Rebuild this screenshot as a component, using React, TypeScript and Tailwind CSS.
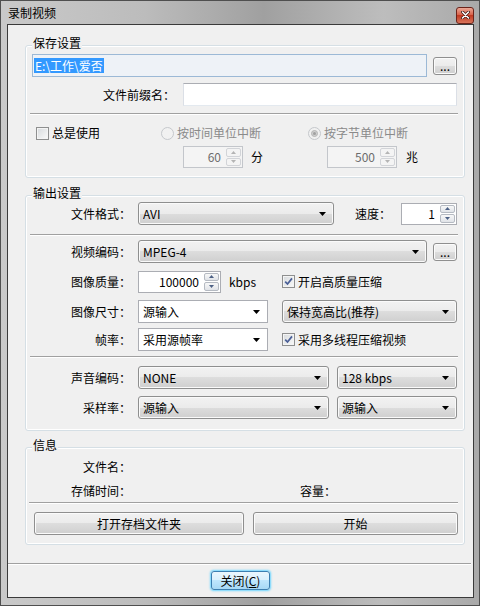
import React from "react"

// 小三角
function DropArrow() {
  return (
    <svg width="7" height="4" viewBox="0 0 7 4" className="shrink-0">
      <path d="M0 0h7L3.5 4z" fill="#000" />
    </svg>
  )
}

function Combo({ value, className, white }: { value: string; className: string; white?: boolean }) {
  return (
    <div
      className={`${className} h-[23px] shrink-0 flex items-center border pl-[4px] pr-[7px] ${
        white
          ? "border-[#abadb3] bg-white"
          : "rounded-[3px] border-[#8e8f8f] bg-[linear-gradient(#f2f2f2,#ebebeb_50%,#dddddd_50%,#cfcfcf)] shadow-[inset_0_0_0_1px_#fafafa]"
      }`}
    >
      <span className="flex-1 truncate leading-[16px]">{value}</span>
      <DropArrow />
    </div>
  )
}

function SpinBtn({ up, disabled }: { up?: boolean; disabled?: boolean }) {
  return (
    <div
      className={`flex-1 flex items-center justify-center rounded-[2px] border ${
        disabled ? "border-[#d2d4d8] bg-[#f4f4f4]" : "border-[#b5bac2] bg-[linear-gradient(#f8f8f8,#e0e3e8)]"
      }`}
    >
      <svg width="5" height="3" viewBox="0 0 5 3">
        <path d={up ? "M0 3h5L2.5 0z" : "M0 0h5L2.5 3z"} fill={disabled ? "#b4b4b4" : "#4d6185"} />
      </svg>
    </div>
  )
}

function Spin({ value, className, disabled }: { value: string; className: string; disabled?: boolean }) {
  return (
    <div
      className={`${className} h-[22px] shrink-0 flex border ${
        disabled ? "border-[#c3c6cb] bg-[#f4f4f4] text-[#6d6d6d]" : "border-[#abadb3] bg-white"
      }`}
    >
      <span className="flex-1 text-right pr-[5px] leading-[20px]">{value}</span>
      <div className="w-[16px] flex flex-col gap-[1px] py-[1px] pr-[1px]">
        <SpinBtn up disabled={disabled} />
        <SpinBtn disabled={disabled} />
      </div>
    </div>
  )
}

function Check({ checked }: { checked?: boolean }) {
  return (
    <span className="w-[13px] h-[13px] shrink-0 border border-[#8e8f8f] bg-[#f4f4f4] p-[1px] flex">
      <span className="flex-1 flex items-center justify-center bg-[linear-gradient(135deg,#d9dcdf,#f7f7f7)]">
        {checked && (
          <svg width="9" height="9" viewBox="0 0 9 9">
            <path d="M1.2 4.6l2.3 2.4L8 1.4" stroke="#4a5f97" strokeWidth="1.7" fill="none" />
          </svg>
        )}
      </span>
    </span>
  )
}

function Radio({ checked }: { checked?: boolean }) {
  return (
    <span className="w-[13px] h-[13px] shrink-0 rounded-full border border-[#c5c8cc] bg-[#f1f1f1] flex items-center justify-center">
      {checked && (
        <span className="w-[7px] h-[7px] rounded-full border border-[#b6b6b6] bg-[#cfcfcf] flex items-center justify-center">
          <span className="w-[3px] h-[3px] rounded-full bg-[#a0a0a0]" />
        </span>
      )}
    </span>
  )
}

function Btn({ children, className }: { children: React.ReactNode; className: string }) {
  return (
    <div
      className={`${className} shrink-0 flex items-center justify-center rounded-[3px] border border-[#8f8f8f] bg-[linear-gradient(#f2f2f2,#ebebeb_50%,#dddddd_50%,#cfcfcf)] shadow-[inset_0_0_0_1px_#fbfbfb] leading-[16px]`}
    >
      {children}
    </div>
  )
}

function Sep({ className }: { className: string }) {
  return <div className={`${className} h-[2px] border-t border-b border-t-[#a0a0a0] border-b-white`} />
}

function Group({ title, className, children }: { title: string; className: string; children: React.ReactNode }) {
  return (
    <div className={`${className} relative flex flex-col rounded-[3px] border border-[#d5dfe5] shadow-[inset_0_0_0_1px_#ffffff]`}>
      <span className="absolute top-[-10px] left-[6px] px-[1px] bg-[#f0f0f0] leading-[14px]">{title}</span>
      {children}
    </div>
  )
}

function Label({ children }: { children: React.ReactNode }) {
  return <span className="w-[105px] shrink-0 text-right leading-[16px] mr-[7px]">{children}</span>
}

export default function App() {
  return (
    <div className="w-[480px] h-[606px] flex flex-col border border-[#4f4f4f] bg-[linear-gradient(90deg,#c9c9c9,#bcbcbc_30%,#a0a0a0_55%,#bdbdbd_80%,#a9a9a9)] text-[12px] text-black font-['Noto_Sans_CJK_SC','Liberation_Sans',sans-serif]">
      {/* 标题栏 */}
      <div className="h-[23px] shrink-0 flex items-center pl-[7px] pr-[5px]">
        <span className="flex-1 leading-[16px]">录制视频</span>
        <div className="w-[18px] h-[17px] mt-[5px] rounded-[3px] border border-[#6b231a] bg-[linear-gradient(#eba896,#d65a42_50%,#c13a22_50%,#d8745a)] flex items-center justify-center">
          <svg width="9" height="8" viewBox="0 0 9 8">
            <path d="M1.5 1l6 6M7.5 1l-6 6" stroke="#3a1410" strokeWidth="3" strokeLinecap="round" />
            <path d="M1.5 1l6 6M7.5 1l-6 6" stroke="#ffffff" strokeWidth="1.6" strokeLinecap="round" />
          </svg>
        </div>
      </div>

      {/* 客户区 */}
      <div className="flex-1 ml-[6px] mr-[5px] mb-[7px] border border-[#3a3a3a] bg-[#f0f0f0] flex flex-col">
        <div className="pl-[17px] pr-[8px] flex flex-col">
          {/* 保存设置 */}
          <Group title="保存设置" className="h-[133px] mt-[20px]">
            <div className="flex items-center h-[23px] mt-[8px] ml-[6px]">
              <div className="w-[395px] h-[23px] border border-[#9cb9d6] bg-[#eef2f7] flex items-center pl-[1px]">
                <span className="bg-[#3399ff] text-white leading-[15px] px-[1px]">E:\工作\爱否</span>
              </div>
              <Btn className="ml-[6px] w-[24px] h-[18px]">...</Btn>
            </div>
            <div className="flex items-center h-[23px] mt-[6px]">
              <span className="w-[149px] shrink-0 text-right leading-[16px]">文件前缀名：</span>
              <div className="ml-[8px] w-[274px] h-[23px] border border-t-[#abadb3] border-x-[#dbdfe6] border-b-[#e3e9ef] bg-white" />
            </div>
            <Sep className="mt-[7px] ml-[4px] w-[428px]" />
            <div className="flex items-center h-[16px] mt-[10px] ml-[10px]">
              <div className="w-[125px] flex items-center gap-[3px]">
                <Check />
                <span className="leading-[16px]">总是使用</span>
              </div>
              <div className="w-[147px] flex items-center gap-[3px] text-[#8a8a8a]">
                <Radio />
                <span className="leading-[16px]">按时间单位中断</span>
              </div>
              <div className="flex items-center gap-[3px] text-[#8a8a8a]">
                <Radio checked />
                <span className="leading-[16px]">按字节单位中断</span>
              </div>
            </div>
            <div className="flex items-center h-[22px] mt-[5px] ml-[157px]">
              <div className="w-[144px] flex items-center">
                <Spin value="60" className="w-[60px]" disabled />
                <span className="ml-[8px] leading-[16px]">分</span>
              </div>
              <Spin value="500" className="w-[70px]" disabled />
              <span className="ml-[9px] leading-[16px]">兆</span>
            </div>
          </Group>

          {/* 输出设置 */}
          <Group title="输出设置" className="h-[236px] mt-[17px]">
            <div className="flex items-center h-[23px] mt-[6px]">
              <Label>文件格式：</Label>
              <Combo value="AVI" className="w-[196px]" />
              <span className="ml-[21px] w-[36px] leading-[16px]">速度：</span>
              <Spin value="1" className="ml-[10px] w-[56px]" />
            </div>
            <Sep className="mt-[9px] ml-[4px] w-[428px]" />
            <div className="flex items-center h-[23px] mt-[4px]">
              <Label>视频编码：</Label>
              <Combo value="MPEG-4" className="w-[289px]" />
              <Btn className="ml-[6px] w-[24px] h-[18px]">...</Btn>
            </div>
            <div className="flex items-center h-[23px] mt-[7px]">
              <Label>图像质量：</Label>
              <div className="w-[144px] flex items-center">
                <Spin value="100000" className="w-[83px]" />
                <span className="ml-[8px] leading-[16px]">kbps</span>
              </div>
              <div className="flex items-center gap-[3px]">
                <Check checked />
                <span className="leading-[16px]">开启高质量压缩</span>
              </div>
            </div>
            <div className="flex items-center h-[23px] mt-[7px]">
              <Label>图像尺寸：</Label>
              <Combo value="源输入" className="w-[130px]" white />
              <Combo value="保持宽高比(推荐)" className="ml-[14px] w-[175px]" />
            </div>
            <div className="flex items-center h-[23px] mt-[5px]">
              <Label>帧率：</Label>
              <div className="w-[144px] flex items-center">
                <Combo value="采用源帧率" className="w-[130px]" white />
              </div>
              <div className="flex items-center gap-[3px]">
                <Check checked />
                <span className="leading-[16px]">采用多线程压缩视频</span>
              </div>
            </div>
            <Sep className="mt-[5px] ml-[4px] w-[428px]" />
            <div className="flex items-center h-[23px] mt-[8px]">
              <Label>声音编码：</Label>
              <Combo value="NONE" className="w-[191px]" />
              <Combo value="128 kbps" className="ml-[8px] w-[120px]" />
            </div>
            <div className="flex items-center h-[23px] mt-[7px]">
              <Label>采样率：</Label>
              <Combo value="源输入" className="w-[191px]" />
              <Combo value="源输入" className="ml-[8px] w-[120px]" />
            </div>
          </Group>

          {/* 信息 */}
          <Group title="信息" className="h-[98px] mt-[16px]">
            <div className="flex items-center h-[16px] mt-[11px]">
              <Label>文件名：</Label>
            </div>
            <div className="flex items-center h-[16px] mt-[8px]">
              <Label>存储时间：</Label>
              <span className="ml-[162px] leading-[16px]">容量：</span>
            </div>
            <Sep className="mt-[3px] ml-[3px] w-[429px]" />
            <div className="flex items-center h-[23px] mt-[8px]">
              <Btn className="ml-[8px] w-[210px] h-[23px]">打开存档文件夹</Btn>
              <Btn className="ml-[9px] w-[205px] h-[23px]">开始</Btn>
            </div>
          </Group>
        </div>

        <Sep className="mt-[18px] mr-[2px]" />
        <div className="self-center mt-[6px] w-[59px] h-[19px] rounded-[3px] border border-[#3c7fb1] bg-[linear-gradient(#eaf6fd,#d9f0fc_50%,#bee6fd_50%,#a7d9f5)] shadow-[0_0_2px_1px_#6fd6ff] flex items-center justify-center leading-[16px]">
          关闭(<span className="underline">C</span>)
        </div>
      </div>
    </div>
  )
}
